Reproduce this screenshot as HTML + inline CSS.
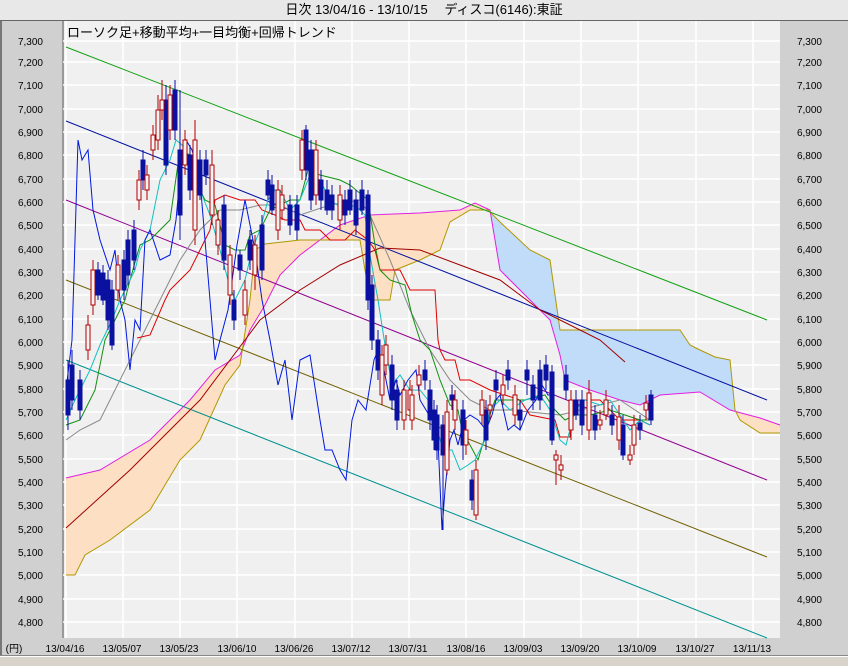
<!DOCTYPE html>
<html><head><meta charset="utf-8"><style>
body{margin:0;width:848px;height:666px;overflow:hidden;background:#e6e6e6;font-family:"Liberation Sans","Noto Sans CJK JP",sans-serif}
</style></head><body>
<svg width="848" height="666" xmlns="http://www.w3.org/2000/svg" style="display:block;font-family:'Liberation Sans','Noto Sans CJK JP',sans-serif">
<rect x="0" y="0" width="848" height="20" fill="#e8e8e8"/>
<text x="424" y="14" font-size="13" text-anchor="middle" fill="#000">日次 13/04/16 - 13/10/15　 ディスコ(6146):東証</text>
<rect x="0" y="20" width="848" height="1.5" fill="#666"/>
<rect x="0" y="21" width="63" height="634" fill="#d0d0d0"/>
<rect x="780" y="21" width="68" height="634" fill="#d0d0d0"/>
<rect x="0" y="638" width="848" height="17" fill="#d0d0d0"/>
<rect x="0" y="21" width="2" height="634" fill="#777"/>
<rect x="63" y="21" width="717" height="617" fill="#f0f0f0"/>
<rect x="62" y="21" width="2" height="617" fill="#999"/>
<rect x="0" y="655" width="848" height="1" fill="#888"/>
<rect x="0" y="656" width="848" height="1" fill="#fff"/>
<rect x="0" y="657" width="848" height="9" fill="#d8d4cc"/>
<g stroke="#fff" stroke-width="1.5">
<line x1="66" y1="21" x2="66" y2="638"/><line x1="123" y1="21" x2="123" y2="638"/><line x1="180" y1="21" x2="180" y2="638"/><line x1="237" y1="21" x2="237" y2="638"/><line x1="295" y1="21" x2="295" y2="638"/><line x1="352" y1="21" x2="352" y2="638"/><line x1="409" y1="21" x2="409" y2="638"/><line x1="466" y1="21" x2="466" y2="638"/><line x1="524" y1="21" x2="524" y2="638"/><line x1="581" y1="21" x2="581" y2="638"/><line x1="638" y1="21" x2="638" y2="638"/><line x1="696" y1="21" x2="696" y2="638"/><line x1="753" y1="21" x2="753" y2="638"/>
<line x1="63" y1="41" x2="780" y2="41"/><line x1="63" y1="62" x2="780" y2="62"/><line x1="63" y1="85" x2="780" y2="85"/><line x1="63" y1="109" x2="780" y2="109"/><line x1="63" y1="132" x2="780" y2="132"/><line x1="63" y1="155" x2="780" y2="155"/><line x1="63" y1="179" x2="780" y2="179"/><line x1="63" y1="202" x2="780" y2="202"/><line x1="63" y1="225" x2="780" y2="225"/><line x1="63" y1="249" x2="780" y2="249"/><line x1="63" y1="272" x2="780" y2="272"/><line x1="63" y1="295" x2="780" y2="295"/><line x1="63" y1="319" x2="780" y2="319"/><line x1="63" y1="342" x2="780" y2="342"/><line x1="63" y1="365" x2="780" y2="365"/><line x1="63" y1="389" x2="780" y2="389"/><line x1="63" y1="412" x2="780" y2="412"/><line x1="63" y1="435" x2="780" y2="435"/><line x1="63" y1="459" x2="780" y2="459"/><line x1="63" y1="482" x2="780" y2="482"/><line x1="63" y1="505" x2="780" y2="505"/><line x1="63" y1="529" x2="780" y2="529"/><line x1="63" y1="552" x2="780" y2="552"/><line x1="63" y1="575" x2="780" y2="575"/><line x1="63" y1="599" x2="780" y2="599"/><line x1="63" y1="622" x2="780" y2="622"/>
</g>
<g font-size="10" fill="#000" text-anchor="end">
<text x="43" y="45">7,300</text><text x="43" y="66">7,200</text><text x="43" y="89">7,100</text><text x="43" y="113">7,000</text><text x="43" y="136">6,900</text><text x="43" y="159">6,800</text><text x="43" y="183">6,700</text><text x="43" y="206">6,600</text><text x="43" y="229">6,500</text><text x="43" y="253">6,400</text><text x="43" y="276">6,300</text><text x="43" y="299">6,200</text><text x="43" y="323">6,100</text><text x="43" y="346">6,000</text><text x="43" y="369">5,900</text><text x="43" y="393">5,800</text><text x="43" y="416">5,700</text><text x="43" y="439">5,600</text><text x="43" y="463">5,500</text><text x="43" y="486">5,400</text><text x="43" y="509">5,300</text><text x="43" y="533">5,200</text><text x="43" y="556">5,100</text><text x="43" y="579">5,000</text><text x="43" y="603">4,900</text><text x="43" y="626">4,800</text>
</g>
<g font-size="10" fill="#000" text-anchor="end">
<text x="822" y="45">7,300</text><text x="822" y="66">7,200</text><text x="822" y="89">7,100</text><text x="822" y="113">7,000</text><text x="822" y="136">6,900</text><text x="822" y="159">6,800</text><text x="822" y="183">6,700</text><text x="822" y="206">6,600</text><text x="822" y="229">6,500</text><text x="822" y="253">6,400</text><text x="822" y="276">6,300</text><text x="822" y="299">6,200</text><text x="822" y="323">6,100</text><text x="822" y="346">6,000</text><text x="822" y="369">5,900</text><text x="822" y="393">5,800</text><text x="822" y="416">5,700</text><text x="822" y="439">5,600</text><text x="822" y="463">5,500</text><text x="822" y="486">5,400</text><text x="822" y="509">5,300</text><text x="822" y="533">5,200</text><text x="822" y="556">5,100</text><text x="822" y="579">5,000</text><text x="822" y="603">4,900</text><text x="822" y="626">4,800</text>
</g>
<g font-size="10" fill="#000" text-anchor="middle">
<text x="14" y="652">(円)</text><text x="65" y="652">13/04/16</text><text x="122" y="652">13/05/07</text><text x="179" y="652">13/05/23</text><text x="237" y="652">13/06/10</text><text x="294" y="652">13/06/26</text><text x="351" y="652">13/07/12</text><text x="408" y="652">13/07/31</text><text x="466" y="652">13/08/16</text><text x="523" y="652">13/09/03</text><text x="580" y="652">13/09/20</text><text x="637" y="652">13/10/09</text><text x="695" y="652">13/10/27</text><text x="752" y="652">13/11/13</text>
</g>
<defs>
<clipPath id="cp1"><rect x="63" y="21" width="427" height="617"/><rect x="735" y="21" width="45" height="617"/></clipPath>
<clipPath id="cp2"><rect x="490" y="21" width="245" height="617"/></clipPath>
</defs>
<g id="cloud">
<polygon clip-path="url(#cp1)" fill="#fde0c4" points="66,478 100,470 150,440 190,400 215,370 240,355 250,330 265,305 280,275 300,255 340,225 370,215 420,213 460,210 475,203 490,210 500,270 530,300 550,320 560,355 565,380 590,390 620,400 640,405 660,395 700,392 730,410 760,418 780,425 780,433 760,433 740,420 735,410 730,360 715,357 700,350 690,345 680,330 580,330 560,330 550,260 530,250 500,222 488,210 470,210 450,222 440,250 420,260 395,270 390,300 370,300 360,240 300,240 265,244 255,250 250,300 240,365 225,385 200,440 180,460 150,510 110,540 85,555 75,575 66,575"/>
<polygon clip-path="url(#cp2)" fill="#c0dcf8" points="66,478 100,470 150,440 190,400 215,370 240,355 250,330 265,305 280,275 300,255 340,225 370,215 420,213 460,210 475,203 490,210 500,270 530,300 550,320 560,355 565,380 590,390 620,400 640,405 660,395 700,392 730,410 760,418 780,425 780,433 760,433 740,420 735,410 730,360 715,357 700,350 690,345 680,330 580,330 560,330 550,260 530,250 500,222 488,210 470,210 450,222 440,250 420,260 395,270 390,300 370,300 360,240 300,240 265,244 255,250 250,300 240,365 225,385 200,440 180,460 150,510 110,540 85,555 75,575 66,575"/>
<polyline fill="none" stroke="#e020e0" stroke-width="1" points="66,478 100,470 150,440 190,400 215,370 240,355 250,330 265,305 280,275 300,255 340,225 370,215 420,213 460,210 475,203 490,210 500,270 530,300 550,320 560,355 565,380 590,390 620,400 640,405 660,395 700,392 730,410 760,418 780,425"/>
<polyline fill="none" stroke="#b09800" stroke-width="1" points="66,575 75,575 85,555 110,540 150,510 180,460 200,440 225,385 240,365 250,300 255,250 265,244 300,240 360,240 370,300 390,300 395,270 420,260 440,250 450,222 470,210 488,210 500,222 530,250 550,260 560,330 580,330 680,330 690,345 700,350 715,357 730,360 735,410 740,420 760,433 780,433"/>
</g>
<g stroke-width="1" fill="none">
<line x1="66" y1="47" x2="767" y2="320" stroke="#10a010"/>
<line x1="66" y1="121" x2="767" y2="400" stroke="#0010a0"/>
<line x1="66" y1="200" x2="767" y2="480" stroke="#900090"/>
<line x1="66" y1="280" x2="767" y2="557" stroke="#706000"/>
<line x1="66" y1="360" x2="767" y2="638" stroke="#009090"/>
<polyline stroke="#a00000" points="66,528 130,470 200,400 260,320 300,290 340,265 380,248 420,250 460,265 500,280 540,310 580,330 600,340 625,362"/>
<polyline stroke="#888" points="66,440 80,430 100,420 120,380 140,340 160,300 180,260 200,230 220,210 240,210 260,205 280,205 300,215 330,205 360,200 370,215 390,260 410,310 430,350 450,380 470,400 490,410 510,410 530,412 560,415 600,405 620,400 650,420"/>
<polyline stroke="#e00000" points="137,338 150,335 165,300 170,290 180,280 190,270 200,250 210,230 215,200 225,195 240,200 255,200 262,210 275,215 285,220 300,220 305,230 320,230 330,240 345,240 355,230 368,240 375,250 380,270 400,270 410,290 435,290 438,340 440,350 445,360 455,360 460,380 470,380 490,390 520,400 530,415 555,420 560,437 570,437 570,400 600,400 620,420 640,420 650,425"/>
<polyline stroke="#109010" points="66,425 80,420 95,390 105,340 115,320 125,300 130,280 140,245 150,240 160,230 170,220 180,150 190,155 200,190 205,200 215,205 225,245 235,250 245,250 250,235 260,230 270,210 280,205 290,200 300,200 308,170 320,175 340,180 350,185 368,200 375,245 380,270 390,280 405,285 412,315 420,340 430,350 440,380 450,405 458,410 462,430 470,445 478,460 484,440 490,415 495,400 505,400 525,400 545,395 555,410 565,420 575,415 590,415 610,410 625,415 640,420 650,420"/>
<polyline stroke="#10c0c0" points="66,420 75,400 90,370 100,345 112,320 120,300 125,290 135,270 140,250 150,230 160,180 170,160 176,140 182,145 190,160 200,190 210,215 220,250 228,280 235,300 245,280 252,250 260,230 268,200 275,190 280,190 290,210 300,200 310,175 320,180 330,200 345,210 355,205 365,215 370,255 378,300 385,345 392,385 400,375 410,390 420,390 428,400 436,425 443,450 452,450 460,470 468,465 475,460 485,440 490,410 500,400 510,410 525,400 540,395 550,410 560,440 566,445 575,410 585,400 600,405 610,400 620,415 630,430 640,420 650,425"/>
<polyline stroke="#0018e0" points="66,390 72,340 78,140 82,160 88,150 93,210 100,240 110,270 115,250 120,300 125,320 130,370 135,320 140,330 145,240 150,230 160,260 170,255 176,220 181,165 186,140 192,150 200,180 210,300 215,360 220,340 228,310 237,245 245,200 255,250 262,300 270,340 278,385 285,360 292,420 300,360 310,355 320,420 325,450 332,450 340,470 346,480 352,420 358,400 366,410 374,360 378,350 384,370 390,400 396,380 400,395 408,380 416,370 420,400 426,410 432,420 438,440 442,530 445,490 450,440 454,430 458,445 464,420 470,415 478,420 486,430 492,415 496,400 500,395 508,430 514,425 520,430 528,410 536,400 542,385 548,395 555,395"/>
</g>
<g id="candles" stroke-width="1">
<g fill="#0a10a0" stroke="#0a10a0">
<path d="M68 360V430M72 350V410M80 370V420M98 262V300M103 265V305M108 270V330M112 280V350M124 250V300M128 230V285M134 220V270M143 150V190M166 85V175M175 80V140M180 90V240M190 145V200M200 150V200M206 150V185M224 195V270M234 290V330M240 250V280M250 230V270M262 215V280M268 170V200M272 175V215M290 195V235M297 195V240M306 125V180M311 140V210M321 170V210M327 180V215M332 185V220M345 190V225M350 180V215M356 190V235M362 180V215M368 190V310M372 275V350M378 330V380M392 355V410M397 380V430M425 360V390M430 380V430M434 400V450M437 405V460M443 415V530M452 385V410M463 400V460M472 470V510M486 400V450M496 370V400M508 360V390M520 400V430M527 360V395M533 375V410M540 360V410M546 355V390M552 365V445M566 365V400M576 390V420M582 390V435M595 405V440M612 405V435M623 415V460M640 415V440M651 390V425"/>
<rect x="66" y="380" width="4" height="35"/><rect x="70" y="365" width="4" height="35"/><rect x="78" y="380" width="4" height="30"/><rect x="96" y="270" width="4" height="25"/><rect x="101" y="273" width="4" height="27"/><rect x="106" y="280" width="4" height="40"/><rect x="110" y="290" width="4" height="55"/><rect x="122" y="260" width="4" height="30"/><rect x="126" y="240" width="4" height="35"/><rect x="132" y="230" width="4" height="30"/><rect x="141" y="160" width="4" height="20"/><rect x="164" y="100" width="4" height="65"/><rect x="173" y="90" width="4" height="40"/><rect x="178" y="150" width="4" height="65"/><rect x="188" y="155" width="4" height="35"/><rect x="198" y="160" width="4" height="35"/><rect x="204" y="160" width="4" height="15"/><rect x="222" y="205" width="4" height="55"/><rect x="232" y="300" width="4" height="20"/><rect x="238" y="255" width="4" height="15"/><rect x="248" y="240" width="4" height="20"/><rect x="260" y="225" width="4" height="45"/><rect x="266" y="180" width="4" height="15"/><rect x="270" y="185" width="4" height="25"/><rect x="288" y="205" width="4" height="20"/><rect x="295" y="205" width="4" height="25"/><rect x="304" y="130" width="4" height="40"/><rect x="309" y="150" width="4" height="50"/><rect x="319" y="180" width="4" height="20"/><rect x="325" y="190" width="4" height="20"/><rect x="330" y="195" width="4" height="15"/><rect x="343" y="200" width="4" height="15"/><rect x="348" y="190" width="4" height="20"/><rect x="354" y="200" width="4" height="25"/><rect x="360" y="190" width="4" height="20"/><rect x="366" y="195" width="4" height="105"/><rect x="370" y="285" width="4" height="55"/><rect x="376" y="340" width="4" height="30"/><rect x="390" y="365" width="4" height="35"/><rect x="395" y="390" width="4" height="30"/><rect x="423" y="370" width="4" height="10"/><rect x="428" y="390" width="4" height="30"/><rect x="432" y="410" width="4" height="30"/><rect x="435" y="415" width="4" height="35"/><rect x="441" y="425" width="4" height="30"/><rect x="450" y="395" width="4" height="5"/><rect x="461" y="410" width="4" height="35"/><rect x="470" y="480" width="4" height="20"/><rect x="484" y="410" width="4" height="30"/><rect x="494" y="380" width="4" height="10"/><rect x="506" y="370" width="4" height="10"/><rect x="518" y="410" width="4" height="10"/><rect x="525" y="370" width="4" height="10"/><rect x="531" y="385" width="4" height="15"/><rect x="538" y="370" width="4" height="30"/><rect x="544" y="365" width="4" height="15"/><rect x="550" y="372" width="4" height="68"/><rect x="564" y="375" width="4" height="15"/><rect x="574" y="400" width="4" height="15"/><rect x="580" y="400" width="4" height="25"/><rect x="593" y="415" width="4" height="15"/><rect x="610" y="415" width="4" height="10"/><rect x="621" y="425" width="4" height="30"/><rect x="638" y="423" width="4" height="7"/><rect x="649" y="395" width="4" height="25"/>
</g>
<g fill="#f4f4f4" stroke="#b00000">
<path d="M88 315V360M93 260V315M118 255V300M139 170V210M147 165V200M153 125V160M158 95V150M162 80V120M170 85V140M185 130V175M195 120V245M212 150V225M218 210V255M230 245V305M245 280V325M255 235V290M278 180V240M282 185V220M302 130V180M316 140V205M340 185V230M382 345V405M386 335V375M404 380V430M410 380V420M412 385V430M419 365V395M447 400V475M455 390V430M466 420V455M476 460V520M482 390V425M490 395V420M503 375V405M515 385V425M556 450V485M561 455V480M571 390V440M589 380V440M600 410V430M606 390V420M619 405V450M630 445V465M634 415V455M646 395V420"/>
<rect x="86" y="325" width="4" height="25"/><rect x="91" y="270" width="4" height="35"/><rect x="116" y="265" width="4" height="25"/><rect x="137" y="180" width="4" height="20"/><rect x="145" y="175" width="4" height="15"/><rect x="151" y="135" width="4" height="15"/><rect x="156" y="110" width="4" height="30"/><rect x="160" y="100" width="4" height="10"/><rect x="168" y="95" width="4" height="35"/><rect x="183" y="140" width="4" height="25"/><rect x="193" y="140" width="4" height="90"/><rect x="210" y="165" width="4" height="50"/><rect x="216" y="220" width="4" height="25"/><rect x="228" y="255" width="4" height="40"/><rect x="243" y="290" width="4" height="25"/><rect x="253" y="245" width="4" height="30"/><rect x="276" y="190" width="4" height="40"/><rect x="280" y="195" width="4" height="15"/><rect x="300" y="140" width="4" height="30"/><rect x="314" y="150" width="4" height="45"/><rect x="338" y="195" width="4" height="25"/><rect x="380" y="355" width="4" height="40"/><rect x="384" y="345" width="4" height="20"/><rect x="402" y="390" width="4" height="30"/><rect x="408" y="390" width="4" height="20"/><rect x="410" y="395" width="4" height="25"/><rect x="417" y="375" width="4" height="10"/><rect x="445" y="412" width="4" height="58"/><rect x="453" y="400" width="4" height="20"/><rect x="464" y="430" width="4" height="15"/><rect x="474" y="470" width="4" height="45"/><rect x="480" y="400" width="4" height="15"/><rect x="488" y="405" width="4" height="5"/><rect x="501" y="385" width="4" height="10"/><rect x="513" y="395" width="4" height="20"/><rect x="554" y="455" width="4" height="5"/><rect x="559" y="465" width="4" height="5"/><rect x="569" y="400" width="4" height="30"/><rect x="587" y="393" width="4" height="37"/><rect x="598" y="420" width="4" height="5"/><rect x="604" y="400" width="4" height="15"/><rect x="617" y="417" width="4" height="23"/><rect x="628" y="455" width="4" height="5"/><rect x="632" y="425" width="4" height="20"/><rect x="644" y="403" width="4" height="7"/>
</g>
</g>
<text x="67" y="37" font-size="13" fill="#000">ローソク足+移動平均+一目均衡+回帰トレンド</text>
</svg>
</body></html>
